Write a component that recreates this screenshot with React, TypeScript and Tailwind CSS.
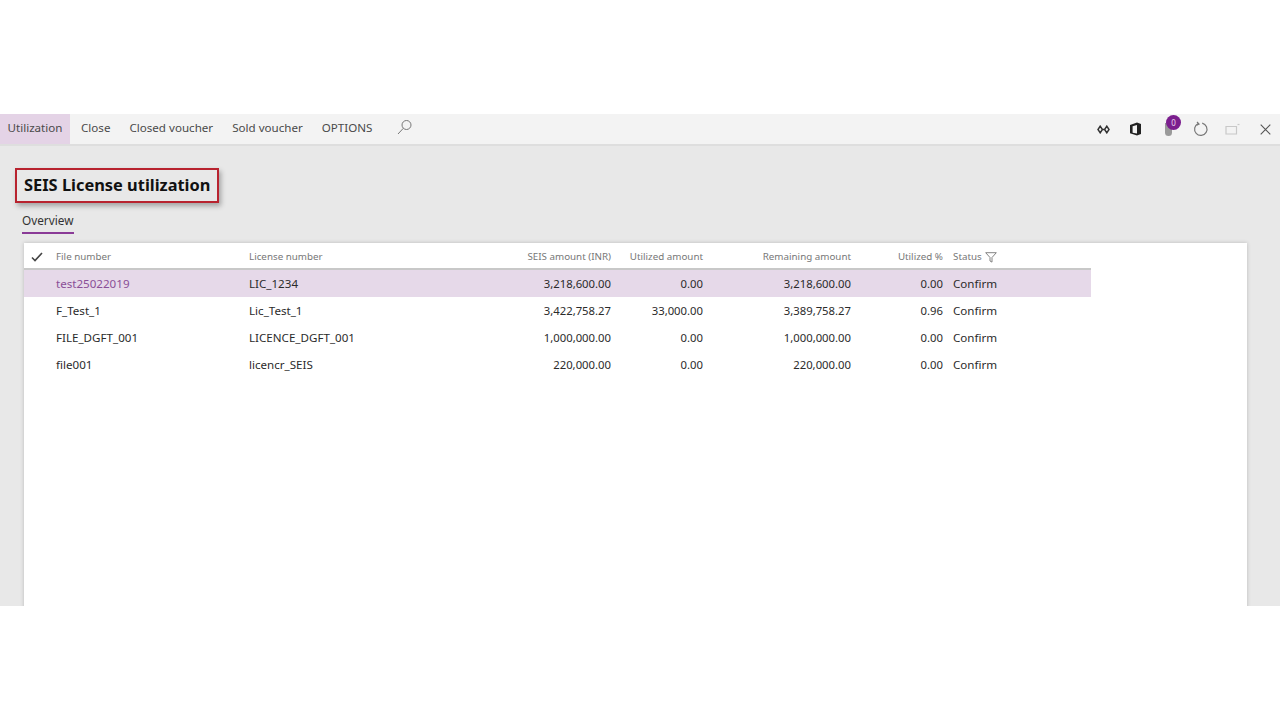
import React from "react";

const rows = [
  ["test25022019", "LIC_1234", "3,218,600.00", "0.00", "3,218,600.00", "0.00", "Confirm"],
  ["F_Test_1", "Lic_Test_1", "3,422,758.27", "33,000.00", "3,389,758.27", "0.96", "Confirm"],
  ["FILE_DGFT_001", "LICENCE_DGFT_001", "1,000,000.00", "0.00", "1,000,000.00", "0.00", "Confirm"],
  ["file001", "licencr_SEIS", "220,000.00", "0.00", "220,000.00", "0.00", "Confirm"],
];

function Cols({ c, first, num }: { c: React.ReactNode[]; first?: string; num?: string }) {
  return (
    <>
      <div className={`w-[193px] shrink-0 ${first ?? ""}`}>{c[0]}</div>
      <div className="w-[210px] shrink-0">{c[1]}</div>
      <div className={`w-[152px] shrink-0 text-right ${num ?? ""}`}>{c[2]}</div>
      <div className={`w-[92px] shrink-0 text-right ${num ?? ""}`}>{c[3]}</div>
      <div className={`w-[148px] shrink-0 text-right ${num ?? ""}`}>{c[4]}</div>
      <div className={`w-[92px] shrink-0 text-right ${num ?? ""}`}>{c[5]}</div>
      <div className="ml-[10px] flex items-center gap-[3px]">{c[6]}</div>
    </>
  );
}

export default function App() {
  return (
    <div className="h-[720px] w-[1280px] bg-white overflow-hidden font-['Noto_Sans',sans-serif] pt-[114px]">
      <div className="h-[492px] bg-[#e8e8e8] flex flex-col overflow-hidden">
        <div className="h-[32px] shrink-0 bg-[#f3f3f3] border-b-2 border-[#dedede] flex items-center text-[11.6px] text-[#4a4a4a]">
          <div className="h-full w-[70px] bg-[#e4d3e6] flex items-center justify-center pb-[3px]">Utilization</div>
          <div className="ml-[11px] pb-[3px]">Close</div>
          <div className="ml-[19px] pb-[3px]">Closed voucher</div>
          <div className="ml-[19px] pb-[3px]">Sold voucher</div>
          <div className="ml-[19px] pb-[3px]">OPTIONS</div>
          <svg className="ml-[24px] mb-[4px]" width="17" height="17" viewBox="0 0 17 17" fill="none" stroke="#777" strokeWidth="1">
            <circle cx="10.5" cy="6" r="4.5" />
            <path d="M7.3 9.3 2 15" />
          </svg>
          <div className="ml-auto flex items-center pr-[9px]">
            <svg width="13" height="9" viewBox="0 0 13 9" fill="none" stroke="#333" strokeWidth="1.5">
              <path d="M3.2 1.2 1 4.5l2.2 3.3 2.2-3.3-2.2-3.3ZM9.8 1.2 7.6 4.5l2.2 3.3L12 4.5 9.8 1.2Z" />
              <path d="M5.4 4.5h2.2" />
            </svg>
            <svg className="ml-[19px]" width="13" height="14" viewBox="0 0 13 14">
              <path d="M1 3 8 .6 12 2v10l-4 1.6L1 11.3V3Z" fill="#222" />
              <path d="M3.6 4.2 8 3v8.6l-4.4-.9V4.2Z" fill="#f3f3f3" />
            </svg>
            <div className="relative ml-[23px] w-[7px] h-[13px] rounded-b-[4px] bg-[#9a9a9a]">
              <div className="absolute left-[1px] top-[-8px] w-[15px] h-[15px] rounded-full bg-[#7b1e8e] text-[#e8d8ec] text-[8px] leading-[15px] text-center">0</div>
            </div>
            <svg className="ml-[21px]" width="16" height="16" viewBox="0 0 16 16" fill="none" stroke="#777" strokeWidth="1.2">
              <path d="M5.2 2.6a6.2 6.2 0 1 0 4-.4" />
              <path d="M4 1l2 2-2.4 1.2" />
            </svg>
            <svg className="ml-[16px]" width="15" height="12" viewBox="0 0 15 12" fill="none" stroke="#c8c8c8" strokeWidth="1.2">
              <path d="M1 3.5h10.5V11H1z" />
              <path d="M12.5 1.5h2" />
            </svg>
            <svg className="ml-[20px]" width="11" height="11" viewBox="0 0 11 11" fill="none" stroke="#555" strokeWidth="1.1">
              <path d="M.7.7l9.6 9.6M10.3.7.7 10.3" />
            </svg>
          </div>
        </div>

        <div className="pl-[15px] pt-[22px] shrink-0">
          <div className="w-[204px] h-[35px] border-2 border-[#b8232f] shadow-[2px_3px_5px_rgba(0,0,0,0.3)] pl-[7px] flex items-center text-[16.4px] font-bold text-[#111] whitespace-nowrap">
            SEIS License utilization
          </div>
        </div>
        <div className="pl-[22px] pt-[9px] shrink-0">
          <div className="w-[52px] h-[22px] border-b-2 border-[#8a3b97] text-[11.8px] leading-[16px] text-[#333] whitespace-nowrap">Overview</div>
        </div>

        <div className="ml-[24px] mt-[9px] w-[1223px] h-[300px] shrink-0 grow bg-white shadow-[0_0_4px_rgba(0,0,0,0.2)] mb-[-10px]">
          <div className="w-[1067px]">
            <div className="h-[27px] flex items-center border-b-2 border-[#c8c8c8] text-[9.8px] text-[#777] pt-[3px]">
              <div className="w-[32px] shrink-0 flex pl-[7px]">
                <svg width="12" height="10" viewBox="0 0 12 10" fill="none" stroke="#444" strokeWidth="1.6"><path d="M1 5.5l3 3L11 1" /></svg>
              </div>
              <Cols c={["File number", "License number", "SEIS amount (INR)", "Utilized amount", "Remaining amount", "Utilized %",
                <>
                  <span>Status</span>
                  <svg width="12" height="11" viewBox="0 0 12 11" fill="none" stroke="#777" strokeWidth="0.9"><path d="M.7.7h10.6L7 5.5v4.6L5 9V5.5L.7.7Z" /></svg>
                </>]} />
            </div>
            {rows.map((r, i) => (
              <div key={i} className={`h-[27px] flex items-center pl-[32px] text-[11.6px] text-[#2b2b2b] ${i === 0 ? "bg-[#e6d9e9]" : ""}`}>
                <Cols c={r} first={i === 0 ? "text-[#8a4f97]" : ""} num="text-[11.3px] pt-[1px]" />
              </div>
            ))}
          </div>
        </div>
      </div>
    </div>
  );
}
